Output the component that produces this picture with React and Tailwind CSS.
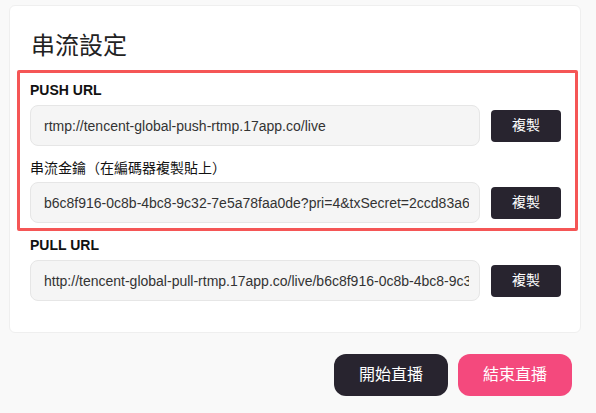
import React from "react";

const font = { fontFamily: '"Liberation Sans", Arial, "Noto Sans CJK TC", sans-serif' };

const UrlRow = ({ value }) => (
  <div className="flex items-center">
    <input
      readOnly
      value={value}
      className="w-[450px] h-[41px] pl-[13px] pr-[10px] bg-[#f5f5f5] border border-[#e6e6e6] rounded-lg text-[14px] text-[#333] outline-none"
      style={font}
    />
    <button className="ml-[11px] w-[70px] h-[32px] rounded bg-[#28242f] text-white text-[14px]">
      複製
    </button>
  </div>
);

const App = () => {
  return (
    <div className="min-h-screen bg-[#f9f9f9] px-[9px] pt-[5px]" style={font}>
      <div className="w-[572px] bg-white border border-[#efefef] rounded-md pt-[24px] pb-[31px] pl-[20px] pr-[19px]">
        <h2 className="pl-[1px] text-[24px] leading-[32px] text-[#222]">串流設定</h2>
        <div className="mt-[8px] ml-[-13px] mr-[-17px] pl-[10px] pr-[14px] pt-[9px] pb-[5px] border-[3px] border-[#f55656] rounded-[2px]">
          <div className="text-[14px] leading-[16px] font-bold text-[#111] mb-[7px]">PUSH URL</div>
          <UrlRow value="rtmp://tencent-global-push-rtmp.17app.co/live" />
          <div className="mt-[14px] text-[14px] leading-[16px] text-[#111] mb-[6px]">
            串流金鑰（在編碼器複製貼上）
          </div>
          <UrlRow value="b6c8f916-0c8b-4bc8-9c32-7e5a78faa0de?pri=4&txSecret=2ccd83a6f1e0c7b2&txTime=66A1B2C3" />
        </div>
        <div className="mt-[6px] text-[14px] leading-[16px] font-bold text-[#111] mb-[7px]">PULL URL</div>
        <UrlRow value="http://tencent-global-pull-rtmp.17app.co/live/b6c8f916-0c8b-4bc8-9c32-7e5a78faa0de.flv" />
      </div>
      <div className="flex justify-end gap-[10px] mt-[21px] w-[563px]">
        <button className="w-[114px] h-[42px] rounded-xl bg-[#28242f] text-white text-[16px]">開始直播</button>
        <button className="w-[114px] h-[42px] rounded-xl bg-[#f4497d] text-white text-[16px]">結束直播</button>
      </div>
    </div>
  );
};

export default App;
